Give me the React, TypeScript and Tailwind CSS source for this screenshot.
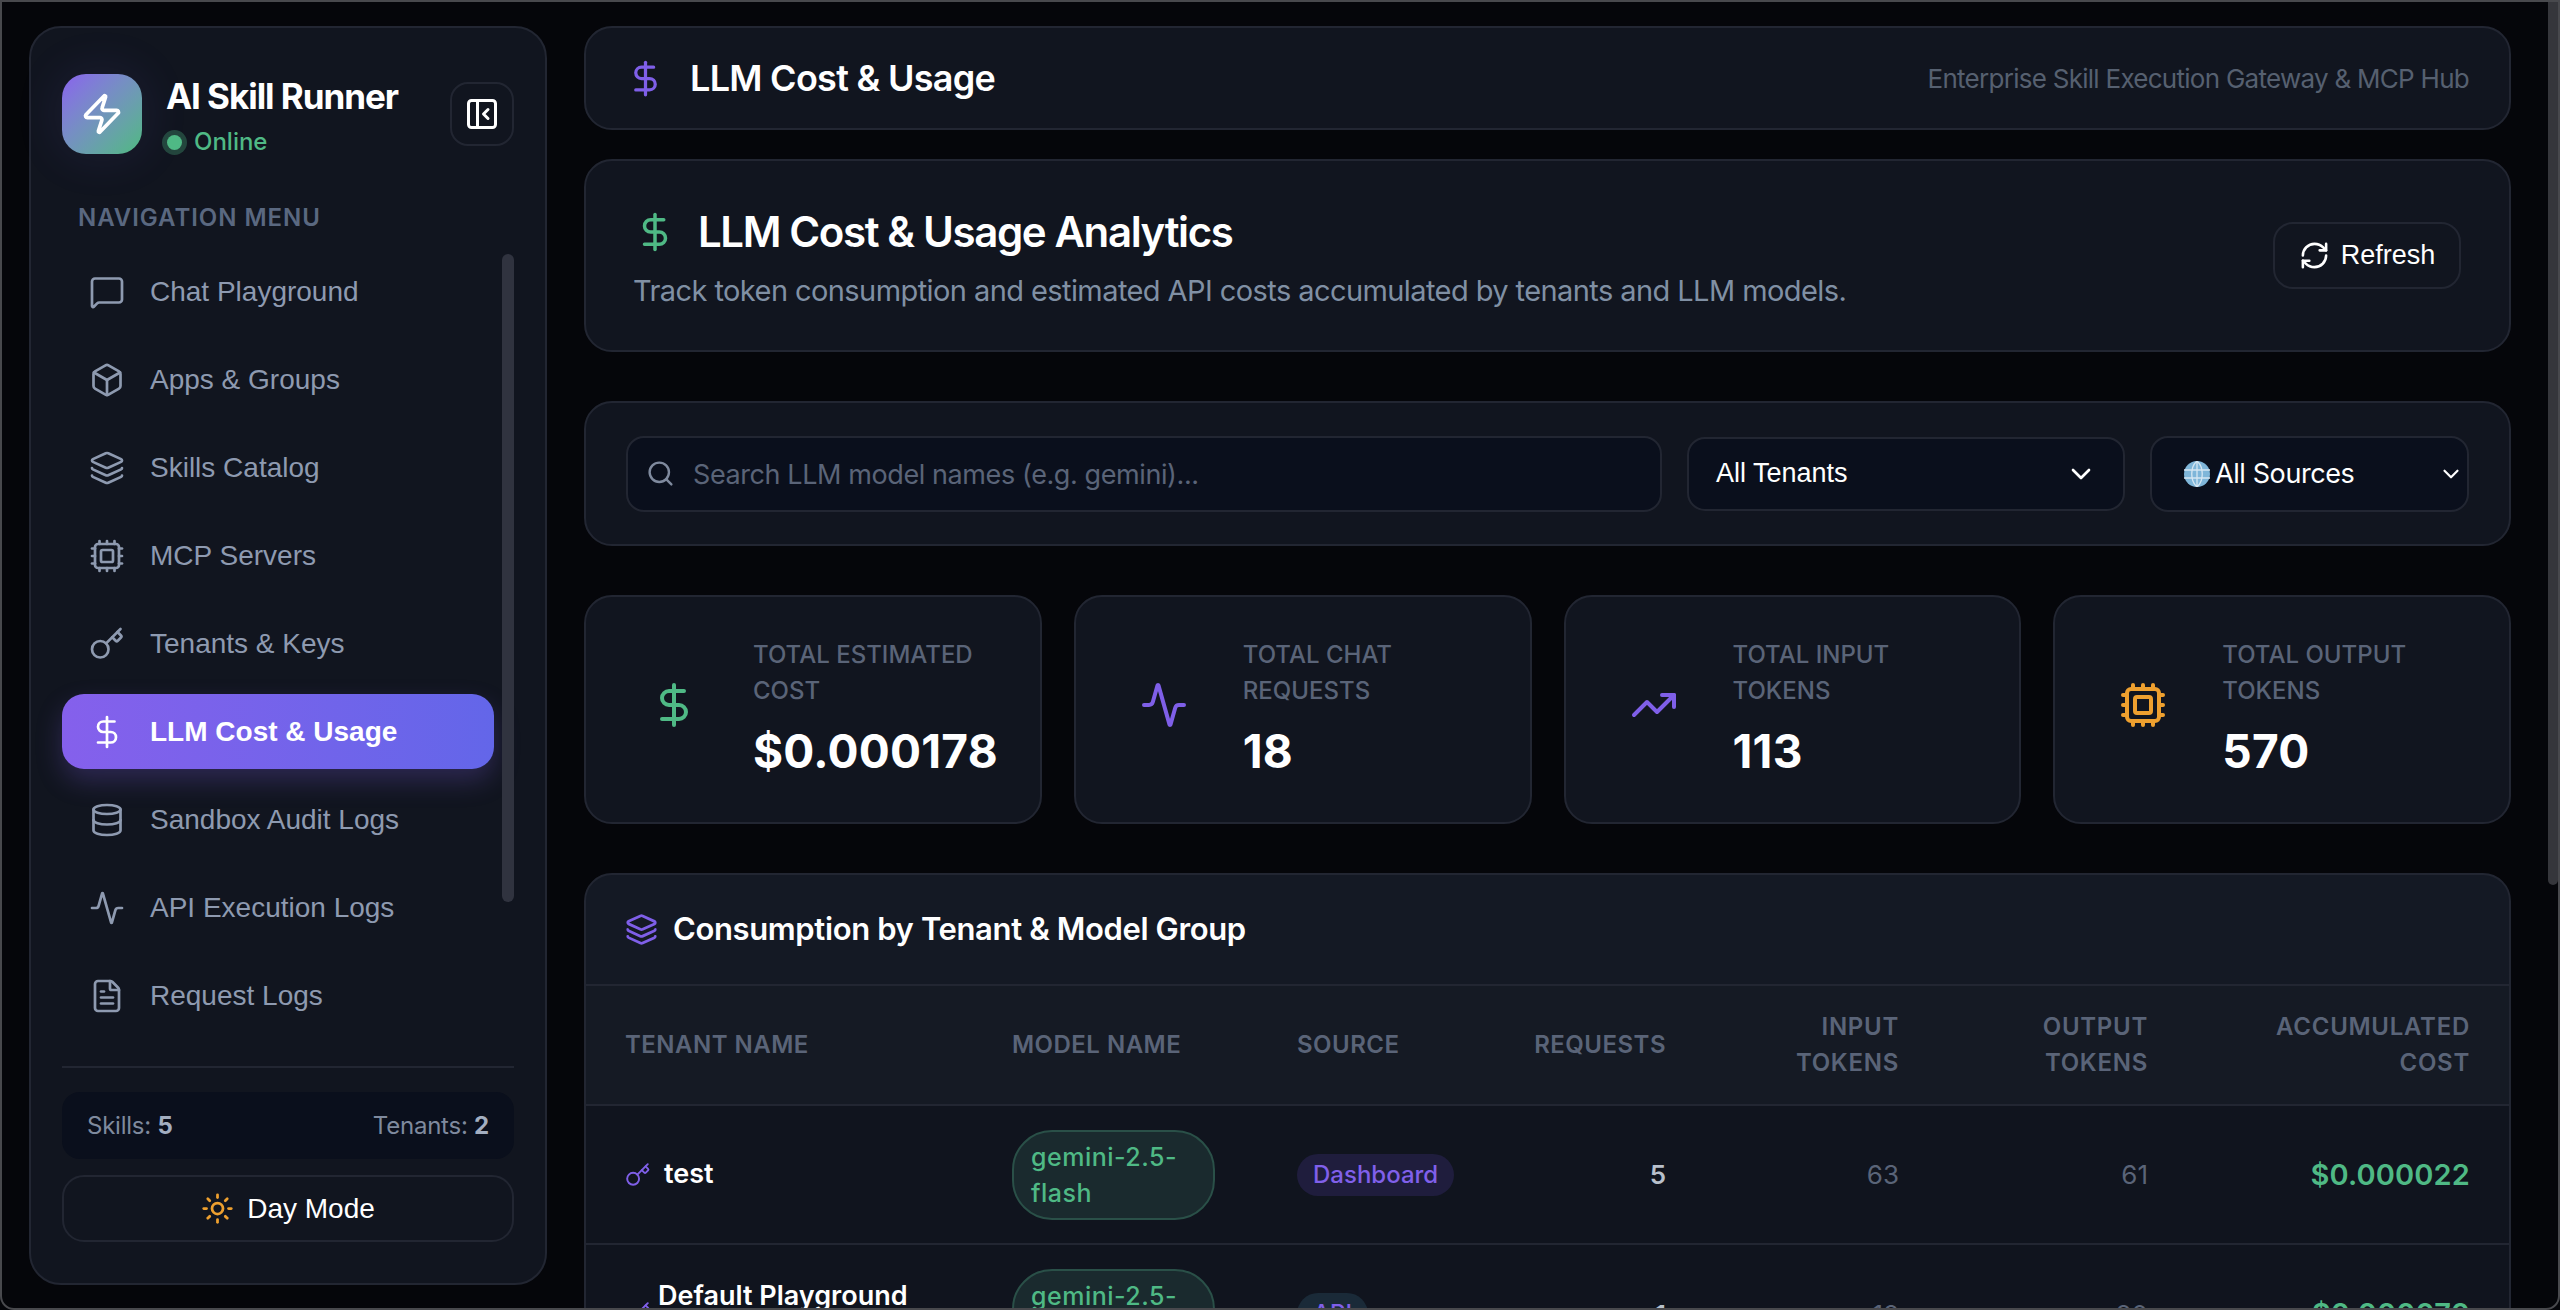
import {
  Activity,
  Box,
  ChevronDown,
  Cpu,
  Database,
  DollarSign,
  FileText,
  Key,
  Layers,
  MessageSquare,
  PanelLeftClose,
  RefreshCw,
  Search,
  Sun,
  TrendingUp,
  Zap,
} from "lucide-react";

const navItems = [
  { label: "Chat Playground", icon: MessageSquare },
  { label: "Apps & Groups", icon: Box },
  { label: "Skills Catalog", icon: Layers },
  { label: "MCP Servers", icon: Cpu },
  { label: "Tenants & Keys", icon: Key },
  { label: "LLM Cost & Usage", icon: DollarSign, active: true },
  { label: "Sandbox Audit Logs", icon: Database },
  { label: "API Execution Logs", icon: Activity },
  { label: "Request Logs", icon: FileText },
];

const stats = [
  { label: "TOTAL ESTIMATED COST", value: "$0.000178", icon: DollarSign, color: "text-[#4fb985]" },
  { label: "TOTAL CHAT REQUESTS", value: "18", icon: Activity, color: "text-[#7f5fe8]" },
  { label: "TOTAL INPUT TOKENS", value: "113", icon: TrendingUp, color: "text-[#7f5fe8]" },
  { label: "TOTAL OUTPUT TOKENS", value: "570", icon: Cpu, color: "text-[#eea02f]" },
];

function Sidebar() {
  return (
    <aside className="flex h-[1259px] w-[518px] shrink-0 flex-col rounded-[32px] border-2 border-[#222632] bg-[#11151f] px-[31px] pt-[46px] pb-[41px]">
      <div className="flex items-start">
        <div className="flex h-[80px] w-[80px] shrink-0 items-center justify-center rounded-[24px] bg-gradient-to-br from-[#8a60ee] to-[#4db97f] shadow-[0_0_50px_rgba(127,95,232,0.12)]">
          <Zap size={44} strokeWidth={2} className="text-white" />
        </div>
        <div className="ml-[24px] flex-1">
          <div className="text-[35px] leading-[44px] font-bold tracking-[-0.03em] whitespace-nowrap text-white">AI Skill Runner</div>
          <div className="mt-[6px] flex items-center text-[24px] leading-[36px] font-medium text-[#4fb985]">
            <span className="mr-[12px] ml-[1px] h-[15px] w-[15px] rounded-full bg-[#4fb985] shadow-[0_0_0_5px_rgba(79,185,133,0.3)]" />
            Online
          </div>
        </div>
        <button className="mt-[8px] flex h-[64px] w-[64px] shrink-0 items-center justify-center rounded-[18px] border-2 border-[#222632] text-white">
          <PanelLeftClose size={36} strokeWidth={2} />
        </button>
      </div>

      <div className="mt-[40px] pl-[16px] text-[24px] leading-[36px] font-semibold tracking-[0.04em] text-[#5a6880]">
        NAVIGATION MENU
      </div>

      <div className="mt-[18px] flex flex-1 gap-[8px]">
        <nav className="flex flex-1 flex-col gap-[13.1px] font-['Liberation_Sans',Arial,sans-serif]">
          {navItems.map((item) => (
            <a
              key={item.label}
              className={
                item.active
                  ? "flex h-[75px] items-center gap-[25px] rounded-[22px] bg-gradient-to-r from-[#8560ec] to-[#6366e9] pl-[27px] text-[28px] font-bold text-white shadow-[0_12px_26px_rgba(127,95,232,0.25)]"
                  : "flex h-[75px] items-center gap-[25px] rounded-[22px] pl-[27px] text-[28px] text-[#8e9ab0]"
              }
            >
              <item.icon size={36} strokeWidth={1.8} className="shrink-0" />
              {item.label}
            </a>
          ))}
        </nav>
        <div className="h-[648px] w-[12px] rounded-full bg-[#30333f]" />
      </div>

      <div className="border-t-2 border-[#222632] pt-[24px]">
        <div className="flex h-[67px] items-center justify-between rounded-[18px] bg-[#0a0f1c] px-[25px] text-[24px] tracking-[-0.01em] text-[#7f8a9e]">
          <span>
            Skills: <b className="font-bold text-[#a3aec0]">5</b>
          </span>
          <span>
            Tenants: <b className="font-bold text-[#a3aec0]">2</b>
          </span>
        </div>
        <button className="mt-[16px] flex h-[67px] w-full items-center justify-center gap-[13px] rounded-[22px] border-2 border-[#222632] font-['Liberation_Sans',Arial,sans-serif] text-[28px] text-white">
          <Sun size={33} strokeWidth={2} className="text-[#eea02f]" />
          Day Mode
        </button>
      </div>
    </aside>
  );
}

function Filters() {
  return (
    <section className="mt-[49px] flex h-[145px] items-center gap-[25px] rounded-[28px] border-2 border-[#222632] bg-[#11151f] px-[40px]">
      <label className="flex h-[76px] flex-1 items-center gap-[18px] rounded-[18px] border-2 border-[#222632] bg-[#0a0f1c] pl-[18px]">
        <Search size={29} strokeWidth={2} className="shrink-0 text-[#7f8a9e]" />
        <input
          readOnly
          placeholder="Search LLM model names (e.g. gemini)..."
          className="w-full bg-transparent pt-[3px] text-[27px] tracking-[-0.015em] outline-none placeholder:text-[#5a6478]"
        />
      </label>
      <div className="flex h-[74px] w-[438px] items-center justify-between rounded-[18px] border-2 border-[#222632] bg-[#0a0f1c] pr-[26px] pl-[27px] font-['Liberation_Sans',Arial,sans-serif] text-[27px] text-white">
        All Tenants
        <ChevronDown size={32} strokeWidth={2} />
      </div>
      <div className="flex h-[76px] w-[319px] items-center rounded-[18px] border-2 border-[#222632] bg-[#0a0f1c] pr-[3px] pl-[32px] text-[27px] tracking-[-0.015em] text-white">
        <svg viewBox="0 0 26 26" className="mr-[5px] h-[26px] w-[26px] shrink-0">
          <circle cx="13" cy="13" r="13" fill="#7fb6d9" />
          <path d="M0 9h26M0 17h26M13 0v26M13 0C6 6 6 20 13 26M13 0c7 6 7 20 0 26" fill="none" stroke="#d5e6f2" strokeWidth="1.3" />
        </svg>
        <span className="flex-1 pt-[2px]">All Sources</span>
        <ChevronDown size={26} strokeWidth={2} />
      </div>
    </section>
  );
}

function StatCard({ label, value, icon: Icon, color }: (typeof stats)[number]) {
  return (
    <div className="flex h-[229px] items-center rounded-[28px] border-2 border-[#222632] bg-[#11151f] pl-[40px]">
      <div className="mb-[9px] w-[96px] shrink-0 p-[24px]">
        <Icon size={48} strokeWidth={2} className={color} />
      </div>
      <div className="ml-[31px]">
        <div className="w-[245px] text-[24px] leading-[36px] font-medium tracking-[0] text-[#5a6478]">{label}</div>
        <div className="mt-[12px] mb-[1px] text-[46px] leading-[60px] font-bold tracking-[0.005em] text-white">{value}</div>
      </div>
    </div>
  );
}

function Pill({ children, className }: { children: React.ReactNode; className: string }) {
  return <span className={"inline-block rounded-full " + className}>{children}</span>;
}

function ModelPill() {
  return (
    <span className="inline-block w-[203px] rounded-[40px] border-2 border-[#2a5048] bg-[#1a2a2e] px-[17px] py-[7px] text-[25px] leading-[36px] font-medium tracking-[0.02em] text-[#4fb985]">
      gemini-2.5-flash
    </span>
  );
}

function UsageTable() {
  const th = "py-0 text-[24px] leading-[36px] font-semibold tracking-[0.02em] text-[#5a6478]";
  return (
    <section className="mt-[49px] overflow-hidden rounded-t-[28px] border-2 border-[#222632] bg-[#141924]">
      <div className="flex h-[109px] items-center gap-[15px] pl-[39px] text-[31px] font-semibold tracking-[-0.012em] text-white">
        <Layers size={33} strokeWidth={2} className="text-[#7f5fe8]" />
        Consumption by Tenant &amp; Model Group
      </div>
      <table className="w-[1925px] table-fixed border-collapse">
        <colgroup>
          <col className="w-[387px]" />
          <col className="w-[285px]" />
          <col className="w-[234px]" />
          <col className="w-[215px]" />
          <col className="w-[233px]" />
          <col className="w-[249px]" />
          <col className="w-[322px]" />
        </colgroup>
        <thead>
          <tr className="h-[120px] border-y-2 border-[#222632] bg-[#151a24]">
            <th className={th + " pl-[39px] text-left"}>TENANT NAME</th>
            <th className={th + " pl-[39px] text-left"}>MODEL NAME</th>
            <th className={th + " pl-[39px] text-left"}>SOURCE</th>
            <th className={th + " px-[41px] text-right"}>REQUESTS</th>
            <th className={th + " px-[41px] tracking-[0.03em] text-right"}>INPUT TOKENS</th>
            <th className={th + " px-[41px] tracking-[0.03em] text-right"}>OUTPUT TOKENS</th>
            <th className={th + " px-[41px] tracking-[0.03em] text-right"}>ACCUMULATED COST</th>
          </tr>
        </thead>
        <tbody className="bg-[#10141e]">
          <tr className="h-[139px] border-b-2 border-[#222632]">
            <td className="pl-[39px]">
              <div className="flex items-center gap-[13px] text-[27px] font-semibold text-white">
                <Key size={26} strokeWidth={1.8} className="text-[#7f5fe8]" />
                test
              </div>
            </td>
            <td className="pl-[39px]">
              <ModelPill />
            </td>
            <td className="pl-[39px]">
              <Pill className="bg-[#1f1d3d] px-[16px] py-[3px] text-[24px] leading-[36px] font-medium text-[#8060ea]">Dashboard</Pill>
            </td>
            <td className="px-[41px] text-right text-[26px] font-semibold text-[#b8c0cc]">5</td>
            <td className="px-[41px] text-right text-[26px] text-[#5a6478]">63</td>
            <td className="px-[41px] text-right text-[26px] text-[#5a6478]">61</td>
            <td className="px-[41px] text-right text-[29px] font-semibold tracking-[0.005em] text-[#4fb985]">$0.000022</td>
          </tr>
          <tr className="h-[139px]">
            <td className="pl-[39px]">
              <div className="flex items-center gap-[7px] text-[27px] leading-[36px] font-semibold text-white">
                <Key size={26} strokeWidth={1.8} className="shrink-0 text-[#7f5fe8]" />
                <span className="pb-[36px]">Default Playground</span>
              </div>
            </td>
            <td className="pl-[39px]">
              <ModelPill />
            </td>
            <td className="pl-[39px]">
              <Pill className="bg-[#1a2a38] px-[16px] py-[3px] text-[24px] leading-[36px] font-medium text-[#8060ea]">API</Pill>
            </td>
            <td className="px-[41px] text-right text-[26px] font-semibold text-[#b8c0cc]">1</td>
            <td className="px-[41px] text-right text-[26px] text-[#5a6478]">12</td>
            <td className="px-[41px] text-right text-[26px] text-[#5a6478]">80</td>
            <td className="px-[41px] text-right text-[29px] font-semibold tracking-[0.005em] text-[#4fb985]">$0.000070</td>
          </tr>
        </tbody>
      </table>
    </section>
  );
}

export default function App() {
  return (
    <div className="relative flex h-[1310px] w-[2560px] gap-[37px] overflow-hidden bg-[#05060a] pt-[26px] pr-[49px] pl-[29px] font-['Inter',sans-serif]">
      <Sidebar />
      <main className="min-w-0 flex-1">
        <header className="flex h-[104px] items-center justify-between rounded-[28px] border-2 border-[#222632] bg-[#11151f] px-[40px]">
          <div className="flex items-center gap-[25px] text-[36px] font-semibold tracking-[-0.02em] text-white">
            <DollarSign size={39} strokeWidth={2} className="text-[#7f5fe8]" />
            LLM Cost &amp; Usage
          </div>
          <div className="text-[26px] tracking-[-0.028em] text-[#566070]">Enterprise Skill Execution Gateway &amp; MCP Hub</div>
        </header>

        <section className="mt-[29px] flex h-[193px] items-center justify-between rounded-[28px] border-2 border-[#222632] bg-[#11151f] pr-[48px] pl-[48px]">
          <div className="pt-[4px]">
            <div className="flex items-center gap-[22px] text-[42px] leading-[54px] font-semibold tracking-[-0.033em] text-white">
              <DollarSign size={42} strokeWidth={2} className="text-[#4fb985]" />
              LLM Cost &amp; Usage Analytics
            </div>
            <p className="mt-[12px] -ml-[1px] text-[29px] leading-[40px] tracking-[-0.02em] text-[#8090a4]">
              Track token consumption and estimated API costs accumulated by tenants and LLM models.
            </p>
          </div>
          <button className="flex h-[67px] w-[188px] items-center justify-center gap-[11px] rounded-[20px] border-2 border-[#222632] font-['Liberation_Sans',Arial,sans-serif] text-[27px] text-white">
            <RefreshCw size={31} strokeWidth={2} />
            Refresh
          </button>
        </section>

        <Filters />

        <div className="mt-[49px] grid grid-cols-4 gap-[32px]">
          {stats.map((s) => (
            <StatCard key={s.label} {...s} />
          ))}
        </div>

        <UsageTable />
      </main>

      {/* page scrollbar + window frame sit over the content */}
      <div className="absolute top-[2px] right-[2px] h-[883px] w-[10px] rounded-b-full bg-[#35363b]" />
      <div className="pointer-events-none absolute inset-0 rounded-b-[14px] border-2 border-[#48494d]" />
    </div>
  );
}
